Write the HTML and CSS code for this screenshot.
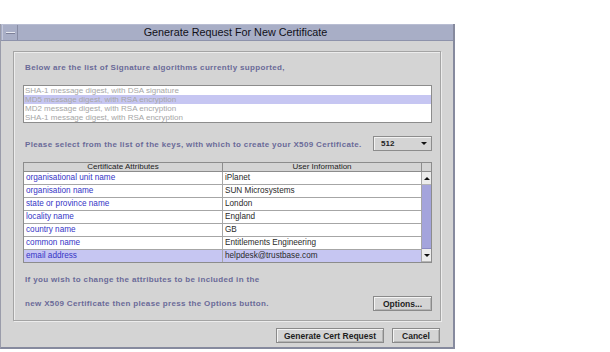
FILE: index.html
```html
<!DOCTYPE html>
<html lang="en">
<head>
  <meta charset="UTF-8" />
  <title>Generate Request For New Certificate</title>
  <link rel="stylesheet" href="styles.css">
</head>
<body>

  <div class="window">
    <div class="titlebar">
      <div class="menu-btn"><span></span></div>
      <div class="title">Generate Request For New Certificate</div>
    </div>

    <div class="content">
      <div class="panel">
        <p class="label first">Below are the list of Signature algorithms currently supported,</p>

        <ul class="algo-list">
          <li>SHA-1 message digest, with DSA signature</li>
          <li class="selected">MD5 message digest, with RSA encryption</li>
          <li>MD2 message digest, with RSA encryption</li>
          <li>SHA-1 message digest, with RSA encryption</li>
        </ul>

        <div class="key-row">
          <p class="label">Please select from the list of the keys, with which to create your X509 Certificate.</p>
          <div class="combo">
            <span>512</span>
            <span class="arrow down"></span>
          </div>
        </div>

        <div class="grid">
          <table>
            <thead>
              <tr>
                <th>Certificate Attributes</th>
                <th>User Information</th>
              </tr>
            </thead>
            <tbody>
              <tr><td>organisational unit name</td><td>iPlanet</td></tr>
              <tr><td>organisation name</td><td>SUN Microsystems</td></tr>
              <tr><td>state or province name</td><td>London</td></tr>
              <tr><td>locality name</td><td>England</td></tr>
              <tr><td>country name</td><td>GB</td></tr>
              <tr><td>common name</td><td>Entitlements Engineering</td></tr>
              <tr class="selected"><td>email address</td><td>helpdesk@trustbase.com</td></tr>
            </tbody>
          </table>
          <div class="scrollbar">
            <div class="scroll-corner"></div>
            <div class="scroll-btn"><span class="arrow up"></span></div>
            <div class="scroll-thumb"></div>
            <div class="scroll-btn"><span class="arrow down"></span></div>
          </div>
        </div>

        <p class="label spaced">If you wish to change the attributes to be included in the</p>

        <div class="options-row">
          <p class="label">new X509 Certificate then please press the Options button.</p>
          <button class="btn options-btn">Options...</button>
        </div>
      </div>

      <div class="footer">
        <button class="btn generate-btn">Generate Cert Request</button>
        <button class="btn cancel-btn">Cancel</button>
      </div>
    </div>
  </div>

</body>
</html>
```

FILE: styles.css
```css
body {
  margin: 0;
  background-color: white;
  font-family: "Liberation Sans", Arial, sans-serif;
}

p {
  margin: 0;
}

.window {
  margin-top: 24px;
  width: 455px;
  height: 325px;
  box-sizing: border-box;
  background-color: #d4d4d4;
  border-left: 1px solid #9a9caa;
  border-right: 2px solid #868a9e;
  border-bottom: 2px solid #868a9e;
  display: flex;
  flex-direction: column;
}

.titlebar {
  height: 17px;
  box-sizing: border-box;
  background-color: #a8aec6;
  border-top: 1px solid #b8bdd2;
  border-bottom: 1px solid #8e93ab;
  display: flex;
  align-items: stretch;
}

.menu-btn {
  width: 14px;
  margin-left: 1px;
  border-left: 1px solid #c4c8da;
  border-right: 1px solid #878ca4;
  display: flex;
  align-items: center;
  justify-content: center;
}

.menu-btn span {
  width: 9px;
  height: 1px;
  background-color: #e6e8f0;
  border-bottom: 1px solid #7c8098;
}

.title {
  flex: 1;
  text-align: center;
  font-size: 10.8px;
  line-height: 15px;
  color: #101018;
}

.content {
  padding: 10px 0 0 12px;
}

.panel {
  width: 428px;
  height: 270px;
  box-sizing: border-box;
  border: 1px solid #a4a4a4;
  box-shadow: inset 1px 1px 0 #ececec, 1px 1px 0 #ececec;
  padding: 0 8px 0 9px;
}

.label {
  font-size: 8px;
  font-weight: bold;
  line-height: 12px;
  letter-spacing: 0.35px;
  color: #6a6a98;
  padding-left: 2px;
}

.label.first {
  margin-top: 10px;
}

.algo-list {
  list-style: none;
  margin: 11px 0 0;
  padding: 0;
  background: white;
  border: 1px solid #8c8c8c;
}

.algo-list li {
  height: 9px;
  line-height: 9px;
  font-size: 8px;
  color: #a6a6a6;
  padding-left: 1px;
}

.algo-list li.selected {
  background-color: #c6c6f2;
}

.key-row {
  margin-top: 13px;
  display: flex;
  justify-content: space-between;
  align-items: center;
}

.key-row .label {
  margin-top: 3px;
}

.combo {
  width: 59px;
  height: 15px;
  box-sizing: border-box;
  border: 1px solid #8c8c8c;
  box-shadow: inset 1px 1px 0 #f2f2f2;
  display: flex;
  align-items: center;
  justify-content: space-between;
  padding: 0 4px 0 7px;
  font-size: 8px;
  font-weight: bold;
  color: #222;
}

.arrow {
  width: 0;
  height: 0;
  border-left: 3px solid transparent;
  border-right: 3px solid transparent;
}

.arrow.down {
  border-top: 3px solid #111;
}

.arrow.up {
  border-bottom: 3px solid #111;
}

.grid {
  margin-top: 11px;
  display: flex;
  border: 1px solid #8c8c8c;
  background: white;
}

.grid table {
  width: 399px;
  border-collapse: collapse;
  table-layout: fixed;
}

.grid th {
  height: 8px;
  padding: 0;
  font-size: 8px;
  line-height: 8px;
  font-weight: normal;
  color: #222;
  background-color: #d4d4d4;
  border-bottom: 1px solid #8c8c8c;
  border-right: 1px solid #8c8c8c;
}

.grid th:first-child {
  width: 198px;
}

.grid td {
  height: 12px;
  padding: 0 0 0 2px;
  font-size: 8.2px;
  line-height: 12px;
  color: #2a2a2a;
  border-bottom: 1px solid #a6a6a6;
  border-right: 1px solid #a6a6a6;
  white-space: nowrap;
  overflow: hidden;
}

.grid td:first-child {
  color: #3535c6;
}

.grid tr:last-child td {
  border-bottom: none;
}

.grid tr.selected td {
  background-color: #c6c6f2;
}

.scrollbar {
  width: 9px;
  display: flex;
  flex-direction: column;
  background-color: #d4d4d4;
}

.scroll-corner {
  height: 8px;
  border-bottom: 1px solid #8c8c8c;
}

.scroll-btn {
  height: 12px;
  background-color: #ececec;
  display: flex;
  align-items: center;
  justify-content: center;
  border-bottom: 1px solid #b4b4b4;
}

.scroll-thumb {
  flex: 1;
  background-color: #a4a4dc;
  border-bottom: 1px solid #8a8ac4;
}

.label.spaced {
  margin-top: 11px;
}

.options-row {
  margin-top: 10px;
  display: flex;
  justify-content: space-between;
  align-items: center;
}

.btn {
  height: 15px;
  box-sizing: border-box;
  padding: 0;
  font-family: "Liberation Sans", Arial, sans-serif;
  font-size: 8.5px;
  font-weight: bold;
  color: #1e1e1e;
  background-color: #d4d4d4;
  border: 1px solid #8a8a8a;
  box-shadow: inset 1px 1px 0 #f4f4f4, inset -1px -1px 0 #b4b4b4;
}

.options-btn {
  width: 59px;
}

.footer {
  display: flex;
  justify-content: flex-end;
  gap: 8px;
  margin-top: 7px;
  padding-right: 13px;
}

.generate-btn {
  width: 108px;
}

.cancel-btn {
  width: 48px;
}
```
